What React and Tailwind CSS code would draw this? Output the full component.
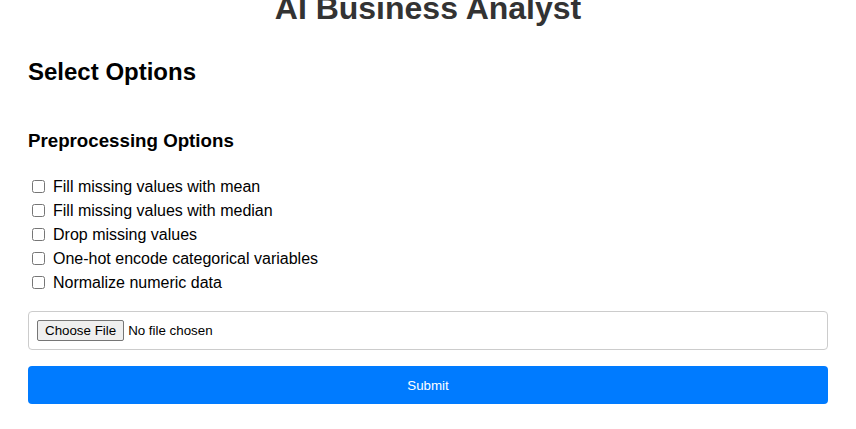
import { useState } from 'react';

const OPTIONS = [
  { id: 'fill_mean', label: 'Fill missing values with mean' },
  { id: 'fill_median', label: 'Fill missing values with median' },
  { id: 'drop_missing', label: 'Drop missing values' },
  { id: 'one_hot', label: 'One-hot encode categorical variables' },
  { id: 'normalize', label: 'Normalize numeric data' },
];

export default function App() {
  const [selected, setSelected] = useState([]);
  const [file, setFile] = useState(null);

  const toggle = (id) => {
    setSelected((prev) => (prev.includes(id) ? prev.filter((x) => x !== id) : [...prev, id]));
  };

  const handleSubmit = (e) => {
    e.preventDefault();
    // TODO: send file + options to the analysis backend
    console.log('submit', { selected, file });
  };

  return (
    <div className="min-h-screen bg-white text-black font-['Liberation_Sans',Arial,sans-serif] overflow-hidden">
      <div className="max-w-[800px] mx-auto">
        <h1 className="text-[32px] leading-[37px] font-bold text-[#333] text-center -mt-[10px]">
          AI Business Analyst
        </h1>

        <form onSubmit={handleSubmit}>
          <h2 className="mt-[31px] text-[24px] leading-[28px] font-bold">Select Options</h2>

          <h3 className="mt-[44px] text-[18.72px] leading-[22px] font-bold">Preprocessing Options</h3>

          <div className="mt-[23px] flex flex-col">
            {OPTIONS.map((opt) => (
              <label key={opt.id} className="h-6 flex items-center text-[16px] cursor-pointer">
                <input
                  type="checkbox"
                  checked={selected.includes(opt.id)}
                  onChange={() => toggle(opt.id)}
                  className="w-[13px] h-[13px] ml-1 mr-2 -mt-px"
                />
                <span>{opt.label}</span>
              </label>
            ))}
          </div>

          <div className="mt-[16px] h-[39px] border border-[#ccc] rounded-[4px] px-2 flex items-center">
            <input
              type="file"
              accept=".csv,.xlsx"
              onChange={(e) => setFile(e.target.files[0] || null)}
              className="text-[13.33px] text-black file:text-[13.33px] file:h-[21px] file:px-[7px] file:mr-1 file:border file:border-[#767676] file:rounded-[2px] file:bg-[#efefef] file:text-black"
            />
          </div>

          <button
            type="submit"
            className="mt-4 w-full h-[38px] pt-px bg-[#007bff] text-white text-[13.33px] rounded-[4px]"
          >
            Submit
          </button>
        </form>
      </div>
    </div>
  );
}
